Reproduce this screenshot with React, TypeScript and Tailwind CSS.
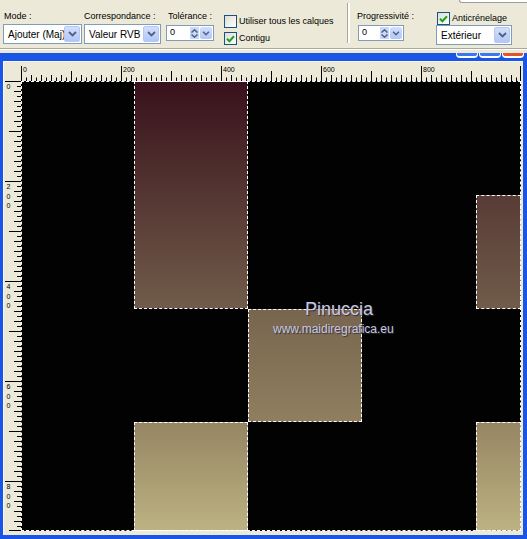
import React from 'react';

// small XP-style widgets used by the toolbar
const Chevron = ({ w = 9, h = 6 }: { w?: number; h?: number }) => (
  <svg width={w} height={h} viewBox="0 0 9 6">
    <path d="M1 1 L4.5 4.5 L8 1" stroke="#4d6185" strokeWidth="1.8" fill="none" />
  </svg>
);

const DropBtn = () => (
  <span className="w-[16px] shrink-0 h-full rounded-[2px] border border-[#b4c8f6] bg-linear-to-b from-[#d2dffc] to-[#b3c7f5] flex items-center justify-center">
    <Chevron />
  </span>
);

const Select = ({ value, width }: { value: string; width: string }) => (
  <div className={`h-[20px] ${width} border border-[#7f9db9] bg-white flex items-stretch p-px`}>
    <span className="flex-1 min-w-0 pl-[3px] flex items-center overflow-hidden whitespace-nowrap text-[10px]">{value}</span>
    <DropBtn />
  </div>
);

const Spin = ({ width }: { width: string }) => (
  <div className={`h-[16px] ${width} border border-[#7f9db9] bg-white flex items-stretch p-px`}>
    <span className="flex-1 pl-[2px] text-[9px] leading-[11px]">0</span>
    <span className="w-[9px] flex flex-col items-center justify-center gap-[1px] bg-[#c9d8fa]">
      <svg width="7" height="4" viewBox="0 0 7 4">
        <path d="M0.5 3.5 L3.5 0.8 L6.5 3.5" stroke="#4d6185" strokeWidth="1.5" fill="none" />
      </svg>
      <svg width="7" height="4" viewBox="0 0 7 4">
        <path d="M0.5 0.5 L3.5 3.2 L6.5 0.5" stroke="#4d6185" strokeWidth="1.5" fill="none" />
      </svg>
    </span>
    <span className="ml-px w-[12px] rounded-[2px] bg-linear-to-b from-[#d2dffc] to-[#b3c7f5] flex items-center justify-center">
      <Chevron w={8} h={5} />
    </span>
  </div>
);

const Check = ({ checked }: { checked?: boolean }) => (
  <span className="w-[13px] h-[13px] shrink-0 border border-[#1c5180] bg-linear-to-br from-[#dcdcd7] to-white flex items-center justify-center">
    {checked && (
      <svg width="9" height="8" viewBox="0 0 9 8">
        <path d="M1 3.8 L3.4 6.2 L8 1.2" stroke="#21a121" strokeWidth="2" fill="none" />
      </svg>
    )}
  </span>
);

// rulers: 200 units = 100 px
const HRuler = () => {
  const ticks = [];
  for (let i = 0; i <= 100; i++) {
    const x = Math.min(i * 5 + 0.5, 499.5);
    const len = i % 20 === 0 ? 15 : i % 10 === 0 ? 10 : i % 2 === 0 ? 6 : 3.5;
    ticks.push(<line key={i} x1={x} x2={x} y1={19 - len} y2={19} stroke="#000" strokeWidth="1" />);
  }
  return (
    <svg width="500" height="19" className="block">
      {ticks}
      {[0, 200, 400, 600, 800].map((v) => (
        <text key={v} x={v / 2 + 2} y={10} fontSize="7" fontFamily="Liberation Sans, Arial, sans-serif" fill="#000">
          {v}
        </text>
      ))}
    </svg>
  );
};

const VRuler = () => {
  const ticks = [];
  for (let i = 0; i <= 90; i++) {
    const y = Math.min(i * 5 + 0.5, 449.5);
    const len = i % 20 === 0 ? 16 : i % 10 === 0 ? 12 : i % 2 === 0 ? 7 : 4;
    ticks.push(<line key={i} y1={y} y2={y} x1={17 - len} x2={17} stroke="#000" strokeWidth="1" />);
  }
  return (
    <svg width="17" height="450" className="block">
      {ticks}
      {[0, 200, 400, 600, 800].map((v) =>
        String(v)
          .split('')
          .map((d, k) => (
            <text key={`${v}-${k}`} x={2.5} y={v / 2 + 8 + k * 9.5} fontSize="7" fontFamily="Liberation Sans, Arial, sans-serif" fill="#000">
              {d}
            </text>
          ))
      )}
    </svg>
  );
};

const Toolbar = () => (
  <div className="h-[53px] bg-[#ece9d8] flex flex-col">
    <div className="h-[3px] flex justify-end">
      <div className="w-[68px] h-[3px] bg-white border-l border-b border-[#9d9d9d] rounded-bl-[3px]" />
    </div>
    <div className="h-[45px] flex items-start text-[9px] leading-[11px] text-black whitespace-nowrap">
      <div className="ml-[3px] w-[79px] pt-[8px] flex flex-col">
        <span className="pl-px">Mode :</span>
        <div className="mt-[2px]">
          <Select value="Ajouter (Maj)" width="w-[79px]" />
        </div>
      </div>
      <div className="ml-[2px] w-[77px] pt-[8px] flex flex-col">
        <span>Correspondance :</span>
        <div className="mt-[2px]">
          <Select value="Valeur RVB" width="w-[77px]" />
        </div>
      </div>
      <div className="ml-[5px] w-[49px] pt-[8px] flex flex-col">
        <span className="pl-[2px]">Tolérance :</span>
        <div className="mt-[3px]">
          <Spin width="w-[48px]" />
        </div>
      </div>
      <div className="ml-[9px] w-[123px] pt-[12px] flex flex-col gap-[4px]">
        <div className="flex items-center gap-[2px]">
          <Check />
          <span>Utiliser tous les calques</span>
        </div>
        <div className="flex items-center gap-[2px]">
          <Check checked />
          <span>Contigu</span>
        </div>
      </div>
      <div className="h-[40px] w-[3px] border-l border-[#aca899] border-r-2 border-r-white" />
      <div className="ml-[7px] w-[48px] pt-[8px] flex flex-col">
        <span>Progressivité :</span>
        <div className="mt-[3px] ml-px">
          <Spin width="w-[46px]" />
        </div>
      </div>
      <div className="ml-[31px] w-[76px] pt-[9px] flex flex-col">
        <div className="flex items-center gap-[2px] ml-px">
          <Check checked />
          <span>Anticrénelage</span>
        </div>
        <div className="mt-0">
          <Select value="Extérieur" width="w-[76px]" />
        </div>
      </div>
    </div>
    <div className="h-px bg-[#aca899]" />
    <div className="h-px bg-white" />
    <div className="h-[3px]" />
  </div>
);

const rect = 'border border-dashed border-white bg-linear-to-b';

const Canvas = () => (
  <div className="relative w-[500px] h-[450px] bg-[#020202] grid grid-cols-[113px_114px_114px_114px_45px] grid-rows-[114px_114px_113px_109px]">
    <div className={`${rect} col-start-2 row-start-1 row-span-2 from-[#38111c] to-[#705c4a]`} />
    <div className={`${rect} col-start-5 row-start-2 from-[#583c36] to-[#705c4a]`} />
    <div className={`${rect} col-start-3 row-start-3 from-[#78654f] to-[#8f7f5f]`} />
    <div className={`${rect} col-start-2 row-start-4 from-[#968664] to-[#bcb282]`} />
    <div className={`${rect} col-start-5 row-start-4 from-[#968664] to-[#bcb282]`} />
    {/* whole-canvas selection outline */}
    <div className="absolute inset-0 border border-dashed border-white pointer-events-none" />
    {/* watermark */}
    <div className="absolute left-[252px] top-[219px] flex flex-col text-[#c9c7e2] [text-shadow:1px_1px_1px_#333] pointer-events-none">
      <span className="ml-[32px] text-[18px] leading-[18px]">Pinuccia</span>
      <span className="mt-[5px] text-[12px] leading-[12px]">www.maidiregrafica.eu</span>
    </div>
  </div>
);

const ImageWindow = () => (
  <div className="bg-[#1a56e6] flex flex-col">
    <div className="h-[8px] flex justify-end gap-[1px] pr-[3px] overflow-hidden">
      <span className="w-[22px] h-[5px] rounded-b-[4px] border-x border-b-2 border-white bg-[#3a78f2]" />
      <span className="w-[22px] h-[5px] rounded-b-[4px] border-x border-b-2 border-white bg-[#3a78f2]" />
      <span className="w-[22px] h-[5px] rounded-b-[4px] border-x border-b-2 border-white bg-[#e2532d]" />
    </div>
    <div className="pl-[3px] pr-[4px] pb-[4px]">
      <div className="bg-[#ece9d8] border-l border-t border-[#f7f6f0] pr-[2px] pb-[4px] flex flex-col">
        <div className="flex">
          <div className="w-[17px] h-[19px]" />
          <HRuler />
        </div>
        <div className="flex">
          <VRuler />
          <Canvas />
        </div>
      </div>
    </div>
  </div>
);

export default function App() {
  return (
    <div className="w-[527px] h-[539px] overflow-hidden bg-[#ece9d8] font-['Liberation_Sans',Arial,sans-serif]">
      <Toolbar />
      <ImageWindow />
    </div>
  );
}
